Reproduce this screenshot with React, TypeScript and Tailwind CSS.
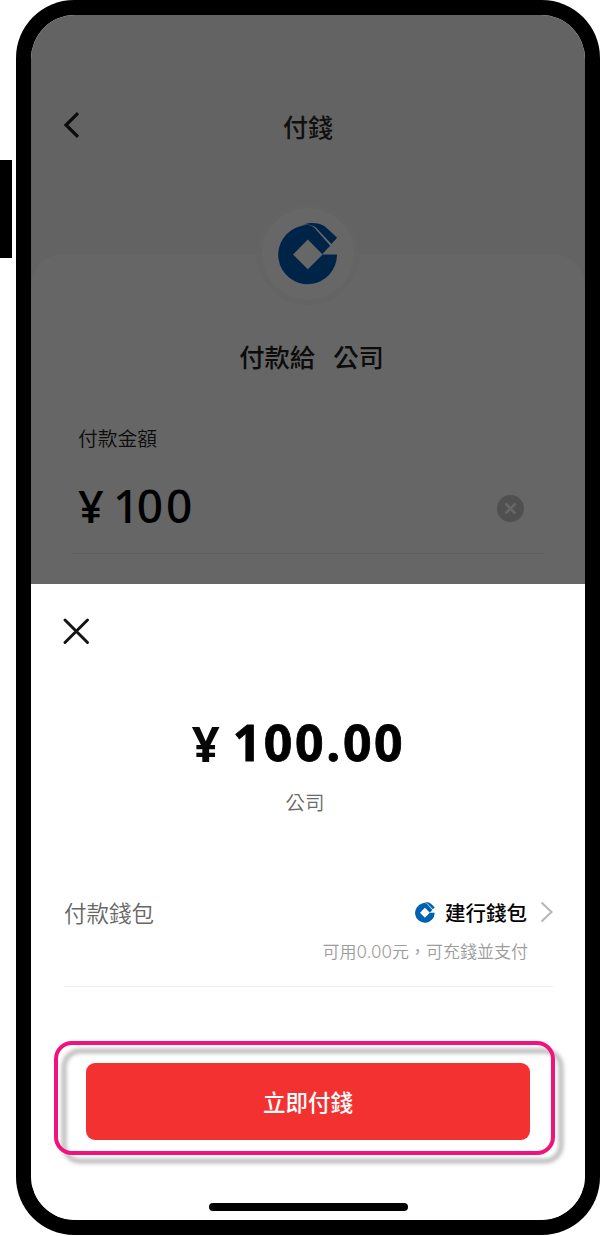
import { X } from 'lucide-react';

// ---------------------------------------------------------------------------
// Bank logo (shared by the payee avatar and the wallet row)
// ---------------------------------------------------------------------------

function BankLogo({ className }: { readonly className: string }) {
  return (
    <svg viewBox="0 0 60 63" className={className} fill="currentColor">
      <path
        fillRule="evenodd"
        d="M59 32.6A29.4 29.4 0 1 1 23 4.1C30 2.2 33.5 3 37 6.5L52.2 23.8L44.6 31.8V32.6ZM29.8 17.6L15 32.4L29.8 47.2L44.6 32.4Z"
      />
      <path d="M25 2.6C31 .4 41 .2 47 4.6L59.2 15.8L53.4 22L38.6 6.2C35 3 31 1.9 25 2.6Z" />
    </svg>
  );
}

// ---------------------------------------------------------------------------
// Dimmed payment page
// ---------------------------------------------------------------------------

function PaymentPage() {
  return (
    <div className="h-[569px] bg-[#636363] flex flex-col shrink-0">
      <div className="h-[194px] shrink-0 grid grid-cols-3 pt-[95px] px-6 items-start">
        <svg viewBox="0 0 18 28" className="w-[18px] h-7 ml-[7px] mt-px text-[#0b0b0b]" fill="none" stroke="currentColor" strokeWidth="3.2">
          <path d="M16 2.2L4 14L16 25.8" />
        </svg>
        <h1 className="text-[25px] leading-8 font-medium text-[#101010] text-center">付錢</h1>
      </div>

      <div className="flex-1 mt-[45px] rounded-t-[32px] bg-[#666666] flex flex-col">
        {/* Avatar */}
        <div className="-mt-[51px] mx-auto size-[102px] shrink-0 rounded-full bg-[#646464] p-[5px]">
          <div className="size-full rounded-full bg-[#676767] flex items-start justify-center pt-[14px]">
            <BankLogo className="w-[60px] h-[63px] text-[#002447]" />
          </div>
        </div>

        <div className="mt-[35px] flex justify-center gap-[18px] text-[25.3px] leading-8 font-medium text-[#0c0c0c] pl-[7px]">
          <span>付款給</span>
          <span>公司</span>
        </div>

        <div className="mx-[41px] mt-[52px] border-b border-[#5f5f5f] h-[130px]">
          <p className="pl-[6px] text-[19.8px] leading-7 font-[350] text-[#0c0c0c]">付款金額</p>
          <div className="flex items-center justify-between pl-[6px] pr-[20px] mt-[20px] h-16">
            <div className="flex items-center text-black">
              <span className="font-['Open_Sans'] text-[45px] leading-[64px] w-[35px] font-semibold pt-1">¥</span>
              <span className="font-['Noto_Sans'] text-[46px] leading-[64px] font-medium tracking-[2.8px] pt-px">
                <span className="tracking-[-2.5px]">1</span>00
              </span>
            </div>
            <div className="size-[27px] rounded-full bg-[#505050] flex items-center justify-center mt-2">
              <X className="size-[17px] text-[#676767]" strokeWidth={3.6} />
            </div>
          </div>
        </div>
      </div>
    </div>
  );
}

// ---------------------------------------------------------------------------
// Confirmation sheet
// ---------------------------------------------------------------------------

function ConfirmSheet() {
  return (
    <div className="flex-1 bg-white flex flex-col">
      <svg viewBox="0 0 28 28" className="size-7 shrink-0 mt-[33px] ml-[31px] text-[#141414]" fill="none" stroke="currentColor" strokeWidth="3" strokeLinecap="round">
        <path d="M3 3L25.5 25.5M25.5 3L3 25.5" />
      </svg>

      <div className="mt-[65px] h-16 flex justify-center items-center font-bold pr-[19px]">
        <span className="font-['Open_Sans'] text-[49px] leading-[64px] w-[41px] pt-px text-[#080808]">¥</span>
        <span className="font-['Noto_Sans'] text-[50px] leading-[64px] tracking-[2.6px] text-black [-webkit-text-stroke:0.8px_black]">100.00</span>
      </div>
      <p className="mt-[14px] text-[19.5px] leading-7 font-[350] text-[#6a6a6a] text-center pr-[6px]">公司</p>

      {/* Wallet */}
      <div className="ml-[33px] mr-8 mt-[79px] h-[92px] border-b border-[#eeeeee]">
        <div className="flex items-center justify-between h-[34px]">
          <span className="text-[22.5px] leading-8 font-[350] text-[#666]">付款錢包</span>
          <div className="flex items-center">
            <BankLogo className="w-5 h-[21px] text-[#0061b2]" />
            <span className="ml-[10px] text-[20.5px] leading-8 font-medium text-black">建行錢包</span>
            <svg viewBox="0 0 14 22" className="w-[14px] h-[22px] ml-3" fill="none" stroke="#b8b8b8" strokeWidth="2.2">
              <path d="M2.5 1.5L12.5 11L2.5 20.5" />
            </svg>
          </div>
        </div>
        <p className="mt-[10px] pr-[25px] text-right text-[17px] leading-6 font-[350] text-[#9c9c9c]">
          可用<span className="font-['Inter'] font-light">0.00</span>元，可充錢並支付
        </p>
      </div>

      {/* Pay button with highlight frame */}
      <div className="relative mx-[55px] mt-[76px] h-[77px] shrink-0">
        <div className="absolute -top-[22px] -left-[32px] w-[501px] h-[114px] rounded-[18px] border-4 border-[#f3127c] drop-shadow-[8px_8px_2px_rgba(0,0,0,0.32)]" />
        <button className="relative size-full rounded-[9px] bg-[#f43131] text-white text-[22.5px] font-medium">立即付錢</button>
      </div>

      <div className="mt-auto mb-[9px] ml-[178px] w-[199px] h-[8px] shrink-0 rounded-full bg-black" />
    </div>
  );
}

export default function App() {
  return (
    <div className="w-[600px] h-[1236px] bg-white overflow-hidden flex items-start font-['Noto_Sans_CJK_TC',sans-serif]">
      {/* Side key */}
      <div className="w-3 h-[98px] mt-[160px] mr-1 shrink-0 bg-black" />
      <div className="w-[584px] h-[1235px] shrink-0 rounded-[58px] bg-black p-[15px]">
        <div className="size-full rounded-[44px] overflow-hidden bg-white flex flex-col">
          <PaymentPage />
          <ConfirmSheet />
        </div>
      </div>
    </div>
  );
}
